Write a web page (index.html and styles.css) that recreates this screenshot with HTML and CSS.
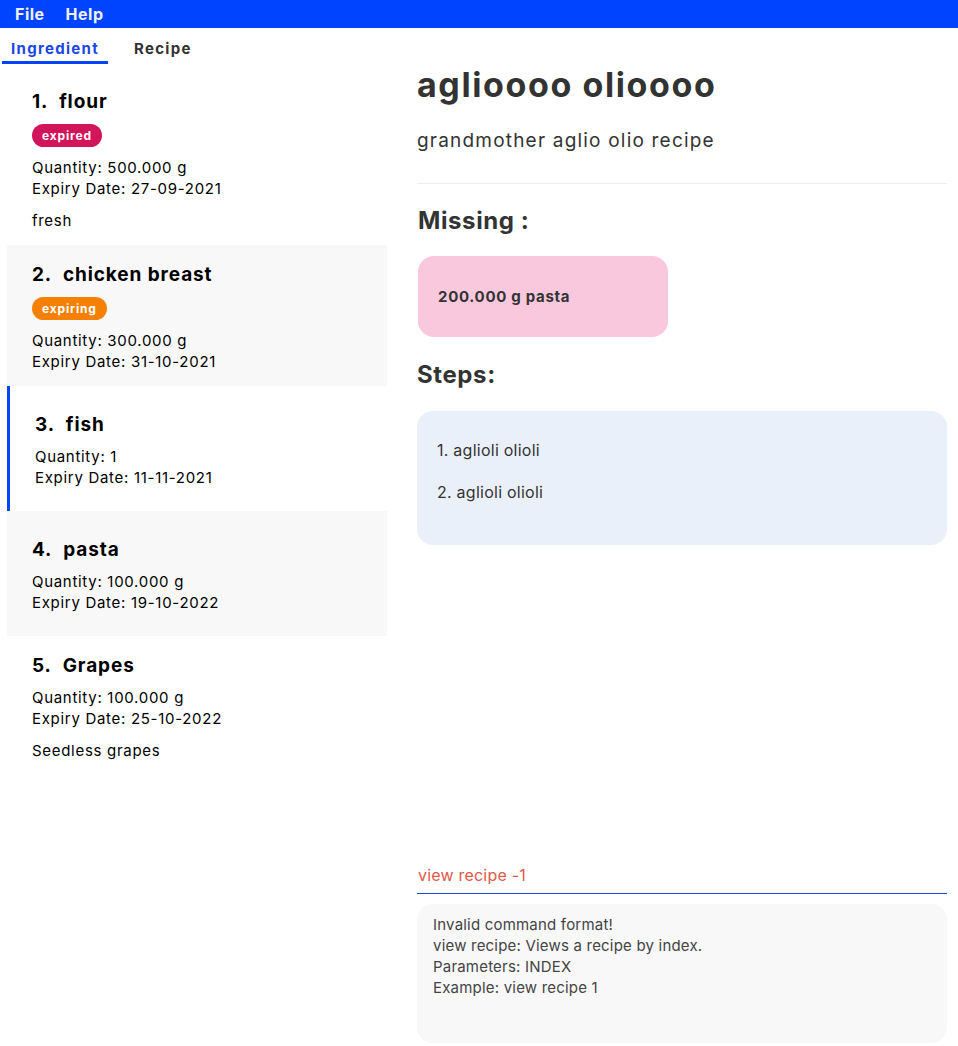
FILE: index.html
```html
<!DOCTYPE html>
<html>
<head>
<meta charset="utf-8">
<link rel="stylesheet" href="styles.css">
</head>
<body>
<div class="menubar">
  <span class="menu-item">File</span>
  <span class="menu-item">Help</span>
</div>
<div class="main">
  <div class="left">
    <div class="tabs">
      <div class="tab active">Ingredient</div>
      <div class="tab">Recipe</div>
    </div>
    <div class="list">
      <div class="card">
        <div class="card-title">1.&nbsp; flour</div>
        <div class="tags"><span class="tag expired">expired</span></div>
        <div class="details">Quantity: 500.000 g<br>Expiry Date: 27-09-2021</div>
        <div class="desc">fresh</div>
      </div>
      <div class="card alt">
        <div class="card-title">2.&nbsp; chicken breast</div>
        <div class="tags"><span class="tag expiring">expiring</span></div>
        <div class="details">Quantity: 300.000 g<br>Expiry Date: 31-10-2021</div>
      </div>
      <div class="card selected">
        <div class="card-title">3.&nbsp; fish</div>
        <div class="details">Quantity: 1<br>Expiry Date: 11-11-2021</div>
      </div>
      <div class="card alt">
        <div class="card-title">4.&nbsp; pasta</div>
        <div class="details">Quantity: 100.000 g<br>Expiry Date: 19-10-2022</div>
      </div>
      <div class="card">
        <div class="card-title">5.&nbsp; Grapes</div>
        <div class="details">Quantity: 100.000 g<br>Expiry Date: 25-10-2022</div>
        <div class="desc">Seedless grapes</div>
      </div>
    </div>
  </div>
  <div class="right">
    <div class="recipe">
      <h1 class="recipe-name">aglioooo olioooo</h1>
      <p class="recipe-desc">grandmother aglio olio recipe</p>
      <div class="divider"></div>
      <h2 class="section-title">Missing :</h2>
      <div class="missing-box">200.000 g pasta</div>
      <h2 class="section-title steps-title">Steps:</h2>
      <div class="steps-box">
        <div class="step">1. aglioli olioli</div>
        <div class="step">2. aglioli olioli</div>
      </div>
    </div>
    <div class="command">
      <div class="command-input">view recipe -1</div>
      <div class="result">Invalid command format!<br>view recipe: Views a recipe by index.<br>Parameters: INDEX<br>Example: view recipe 1</div>
    </div>
  </div>
</div>
</body>
</html>
```
FILE: styles.css
```css
* { box-sizing: border-box; }
html, body { margin: 0; padding: 0; }
body {
  width: 958px;
  height: 1046px;
  background: #ffffff;
  font-family: "Inter", "Noto Sans", sans-serif;
  color: #000;
  overflow: hidden;
}
.menubar {
  height: 28px;
  background: #0044ff;
  display: flex;
  align-items: center;
  padding-left: 15px;
  gap: 21px;
}
.menu-item {
  color: #eef0ff;
  font-weight: 700;
  font-size: 16px;
  letter-spacing: 0.5px;
}
.main {
  display: flex;
  height: 1018px;
}
.left {
  width: 387px;
  display: flex;
  flex-direction: column;
}
.tabs {
  display: flex;
  padding-left: 2px;
  height: 36px;
  align-items: flex-end;
}
.tab {
  font-size: 15px;
  font-weight: 700;
  color: #333;
  letter-spacing: 1.3px;
  padding: 0 9px 3px 9px;
  border-bottom: 3px solid transparent;
}
.tab.active {
  color: #1947e5;
  border-bottom-color: #0044ff;
}
.tab + .tab { margin-left: 17px; }
.list {
  margin-top: 8px;
  margin-left: 7px;
}
.card {
  min-height: 125px;
  padding: 18px 25px 14px 25px;
  display: flex;
  flex-direction: column;
  justify-content: center;
  background: #fff;
}
.card.alt { background: #f8f8f8; }
.card.selected { border-left: 3px solid #0044ff; }
.card-title {
  font-size: 19px;
  font-weight: 700;
  line-height: 23px;
  letter-spacing: 0.9px;
}
.tags { margin-top: 11px; display: flex; }
.tag {
  color: #fff;
  font-size: 12px;
  font-weight: 700;
  letter-spacing: 0.85px;
  padding: 0 10px;
  height: 23px;
  line-height: 23px;
  border-radius: 12px;
}
.tag.expired { background: #d2145a; }
.tag.expiring { background: #f58002; }
.details {
  margin-top: 10px;
  font-size: 15px;
  line-height: 21px;
  letter-spacing: 0.7px;
}
.desc {
  margin-top: 11px;
  font-size: 15px;
  line-height: 21px;
  letter-spacing: 0.7px;
}
.right {
  flex: 1;
  padding: 0 11px 3px 30px;
  display: flex;
  flex-direction: column;
  justify-content: space-between;
}
.recipe { padding-top: 30px; }
.recipe-name {
  margin: 0;
  font-size: 34px;
  line-height: 54px;
  font-weight: 700;
  letter-spacing: 1.6px;
  color: #333;
}
.recipe-desc {
  margin: 17px 0 0 0;
  font-size: 19px;
  line-height: 24px;
  letter-spacing: 1.2px;
  color: #333;
}
.divider {
  margin-top: 30px;
  height: 1px;
  background: #eceef4;
}
.section-title {
  margin: 20px 0 0 1px;
  font-size: 24px;
  line-height: 34px;
  font-weight: 700;
  letter-spacing: 0.6px;
  color: #333;
}
.missing-box {
  margin-top: 18px;
  margin-left: 1px;
  width: 250px;
  height: 81px;
  border-radius: 16px;
  background: #f9c8dc;
  padding-left: 20px;
  display: flex;
  align-items: center;
  font-size: 15px;
  font-weight: 700;
  letter-spacing: 0.7px;
  color: #333;
}
.steps-title { margin: 21px 0 0 0; }
.steps-box {
  margin-top: 19px;
  background: #eaf0f9;
  border-radius: 16px;
  height: 134px;
  padding: 28px 20px;
}
.step {
  font-size: 16px;
  line-height: 22px;
  letter-spacing: 0.25px;
  color: #333;
}
.step + .step { margin-top: 20px; }
.command-input {
  font-size: 16px;
  line-height: 22px;
  letter-spacing: 0.2px;
  color: #e05a4a;
  padding: 0 0 7px 1px;
  border-bottom: 1px solid #2046d8;
}
.result {
  margin-top: 10px;
  height: 139px;
  background: #f8f8f8;
  border-radius: 16px;
  padding: 10px 16px;
  font-size: 15px;
  line-height: 21px;
  letter-spacing: 0.2px;
  color: #444;
}
```
